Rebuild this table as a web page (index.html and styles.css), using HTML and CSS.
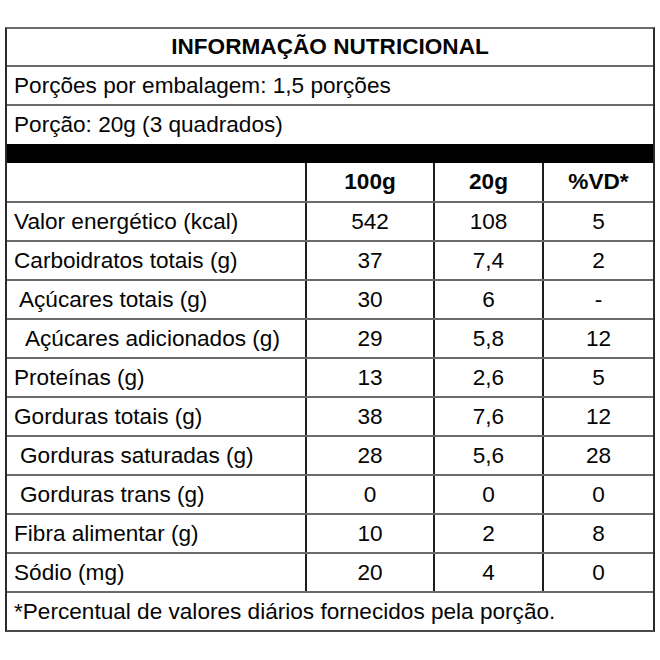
FILE: index.html
```html
<!DOCTYPE html>
<html lang="pt-BR">
<head>
<meta charset="utf-8">
<title>Informação Nutricional</title>
<link rel="stylesheet" href="styles.css">
</head>
<body>
<div class="label">
  <div class="title">INFORMAÇÃO NUTRICIONAL</div>
  <div class="line">Porções por embalagem: 1,5 porções</div>
  <div class="line last">Porção: 20g (3 quadrados)</div>
  <div class="bar"></div>
  <div class="row head">
    <div class="name"></div>
    <div class="val">100g</div>
    <div class="val">20g</div>
    <div class="val">%VD*</div>
  </div>
  <div class="row">
    <div class="name">Valor energético (kcal)</div>
    <div class="val">542</div><div class="val">108</div><div class="val">5</div>
  </div>
  <div class="row">
    <div class="name">Carboidratos totais (g)</div>
    <div class="val">37</div><div class="val">7,4</div><div class="val">2</div>
  </div>
  <div class="row">
    <div class="name sub1">Açúcares totais (g)</div>
    <div class="val">30</div><div class="val">6</div><div class="val">-</div>
  </div>
  <div class="row">
    <div class="name sub2">Açúcares adicionados (g)</div>
    <div class="val">29</div><div class="val">5,8</div><div class="val">12</div>
  </div>
  <div class="row">
    <div class="name">Proteínas (g)</div>
    <div class="val">13</div><div class="val">2,6</div><div class="val">5</div>
  </div>
  <div class="row">
    <div class="name">Gorduras totais (g)</div>
    <div class="val">38</div><div class="val">7,6</div><div class="val">12</div>
  </div>
  <div class="row">
    <div class="name sub1g">Gorduras saturadas (g)</div>
    <div class="val">28</div><div class="val">5,6</div><div class="val">28</div>
  </div>
  <div class="row">
    <div class="name sub1g">Gorduras trans (g)</div>
    <div class="val">0</div><div class="val">0</div><div class="val">0</div>
  </div>
  <div class="row">
    <div class="name">Fibra alimentar (g)</div>
    <div class="val">10</div><div class="val">2</div><div class="val">8</div>
  </div>
  <div class="row">
    <div class="name">Sódio (mg)</div>
    <div class="val">20</div><div class="val">4</div><div class="val">0</div>
  </div>
  <div class="footer">*Percentual de valores diários fornecidos pela porção.</div>
</div>
</body>
</html>
```

FILE: styles.css
```css
html, body {
  margin: 0;
  padding: 0;
  background: #ffffff;
}

body {
  font-family: "Liberation Sans", Arial, sans-serif;
  font-size: 22.6px;
  color: #050505;
}

.label {
  box-sizing: border-box;
  width: 650px;
  margin: 27px 0 0 5px;
  border-top: 2px solid #6a6a6a;
  border-bottom: 2px solid #4a4a4a;
  border-left: 2px solid #2a2a2a;
  border-right: 2px solid #2a2a2a;
}

.title {
  height: 36px;
  line-height: 36px;
  text-align: center;
  font-weight: bold;
  border-bottom: 2px solid #6a6a6a;
}

.line {
  height: 37px;
  line-height: 37px;
  padding-left: 7px;
  border-bottom: 2px solid #6a6a6a;
}

.line.last {
  height: 38px;
  line-height: 38px;
  border-bottom: none;
}

.bar {
  height: 19px;
  background: #000000;
}

.row {
  display: grid;
  grid-template-columns: 298px 128px 109px 111px;
  height: 37px;
  line-height: 37px;
  border-bottom: 2px solid #6a6a6a;
}

.row.head {
  height: 38px;
  line-height: 38px;
  font-weight: bold;
}

.name {
  padding-left: 7px;
  white-space: nowrap;
}

.name.sub1 {
  padding-left: 12px;
}

.name.sub1g {
  padding-left: 13px;
}

.name.sub2 {
  padding-left: 18px;
}

.val {
  box-sizing: border-box;
  border-left: 2px solid #1e1e1e;
  text-align: center;
}

.footer {
  height: 37px;
  line-height: 37px;
  padding-left: 7px;
  white-space: nowrap;
}
```
